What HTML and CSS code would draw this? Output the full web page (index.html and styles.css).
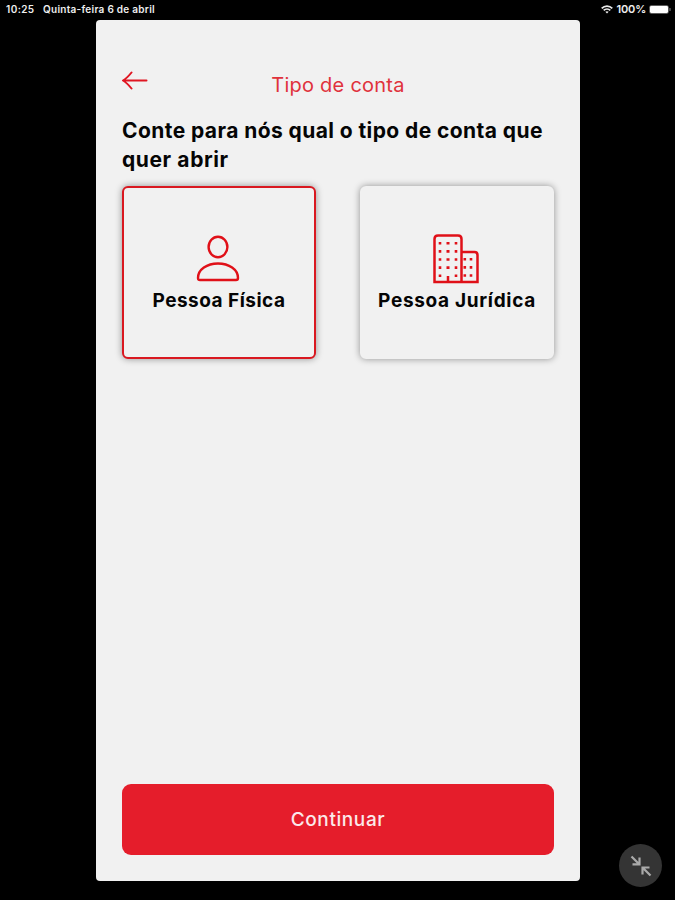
FILE: index.html
```
<!DOCTYPE html>
<html lang="pt-BR">
<head>
<meta charset="UTF-8">
<meta name="viewport" content="width=device-width, initial-scale=1.0">
<title>Tipo de conta</title>
<link rel="stylesheet" href="styles.css">
</head>
<body>
  <div class="statusbar">
    <span class="time">10:25</span>
    <span class="date">Quinta-feira 6 de abril</span>
    <svg class="wifi" width="12" height="9" viewBox="0 0 12 9" fill="none" stroke="#e8e8e8" stroke-width="1.8">
      <path d="M0.7 3.4C3.7 0.4 8.3 0.4 11.3 3.4"/>
      <path d="M2.7 5.4C4.6 3.6 7.4 3.6 9.3 5.4"/>
      <path d="M4.3 6.8L6 8.6L7.7 6.8C6.8 6 5.2 6 4.3 6.8Z" fill="#e8e8e8" stroke="none"/>
    </svg>
    <span class="percent">100%</span>
    <svg class="battery" width="22" height="9" viewBox="0 0 22 9">
      <rect x="0.3" y="0.3" width="19.4" height="8.4" rx="2" fill="#777"/>
      <rect x="1" y="1" width="18" height="7" rx="1.4" fill="#fff"/>
      <rect x="20.4" y="3" width="1.2" height="3" rx="0.6" fill="#777"/>
    </svg>
  </div>

  <main class="screen">
    <header class="topbar">
      <svg class="back" width="28" height="20" viewBox="0 0 28 20" fill="none" stroke="#e01622" stroke-width="2" stroke-linecap="round" stroke-linejoin="round">
        <path d="M24.500 9.500H1.500M9.500 1.500C7.500 4 4.500 7.500 1 9.500C4.500 11.500 7.500 15 9.500 17.500"/>
      </svg>
      <span class="title">Tipo de conta</span>
    </header>

    <h1>Conte para nós qual o tipo de conta que <span class="line2">quer abrir</span></h1>

    <div class="cards">
      <button type="button" class="card selected">
        <svg width="44" height="50" viewBox="0 0 44 50" fill="none" stroke="#e01018" stroke-width="2.4" stroke-linejoin="round">
          <ellipse cx="22" cy="13" rx="9.4" ry="10.2"/>
          <path d="M2 44C2 35.500 11 29.500 22 29.500C33 29.500 42 35.500 42 44C42 45.500 41.300 46 40 46H4C2.700 46 2 45.500 2 44Z"/>
        </svg>
        <span class="fisica">Pessoa Física</span>
      </button>
      <button type="button" class="card">
        <svg width="46" height="50" viewBox="0 0 46 50" fill="none" stroke="#e01018">
          <path stroke-width="2.500" d="M1.500 48V5C1.500 2.800 2.800 1.500 5 1.500H25C27.200 1.500 28.500 2.800 28.500 5V48ZM28.500 18H41.500C43.200 18 44.500 19.300 44.500 21V48H28.500M15 47.500V42"/>
          <path stroke-width="2.600" stroke-dasharray="2.600 5.500" d="M7 8V44M23 8V44M31.800 24V44M38 24V44"/>
          <path stroke-width="3" stroke-dasharray="2.600 5.500" d="M15 8V38"/>
        </svg>
        <span class="juridica">Pessoa Jurídica</span>
      </button>
    </div>

    <button type="button" class="continue">Continuar</button>
  </main>

  <div class="shrink">
    <svg width="22" height="22" viewBox="0 0 22 22" fill="none" stroke="#aaa" stroke-width="2.200">
      <path d="M1.500 1.500L9 9M2.500 9.300H9.500V2.500M20.500 20.500L13 13M19.500 12.500H12.500V19.500"/>
    </svg>
  </div>
</body>
</html>
```
FILE: styles.css
```
* {
  box-sizing: border-box;
}

body {
  margin: 0;
  height: 900px;
  overflow: hidden;
  background-color: #000;
  font-family: Inter, "Liberation Sans", sans-serif;
}

/* Tablet status bar */
.statusbar {
  display: flex;
  align-items: center;
  height: 20px;
  padding: 0 4px 2px 6px;
  color: #eee;
  font-size: 10px;
  font-weight: 600;
  white-space: nowrap;
}

.time {
  width: 37px;
  letter-spacing: 0.4px;
}

.date {
  letter-spacing: 0.27px;
}

.wifi {
  margin-left: auto;
}

.percent {
  margin: 0 3px 0 4px;
  font-size: 11px;
  letter-spacing: -0.2px;
}

/* App window */
.screen {
  display: flex;
  flex-direction: column;
  width: 484px;
  height: 861px;
  margin-left: 96px;
  padding: 0 26px 26px;
  background-color: #f1f1f1;
  border-radius: 4px;
}

.topbar {
  display: flex;
  height: 96px;
  padding-top: 51px;
}

.title {
  flex: 1;
  padding: 2px 28px 0 0;
  color: #e0323c;
  font-size: 20px;
  font-weight: 400;
  letter-spacing: 0.25px;
  line-height: 24px;
  text-align: center;
}

h1 {
  margin: 0;
  color: #050505;
  font-size: 21px;
  font-weight: 700;
  letter-spacing: 0.42px;
  line-height: 29px;
}

.line2 {
  letter-spacing: 0.6px;
}

/* Account type options */
.cards {
  display: flex;
  justify-content: space-between;
  margin-top: 12px;
}

.card {
  display: flex;
  flex-direction: column;
  align-items: center;
  width: 194px;
  height: 173px;
  padding: 46px 0 0;
  border: 2px solid #f1f1f1;
  border-radius: 6px;
  background-color: #f1f1f1;
  box-shadow: 0 0 7px rgba(0, 0, 0, 0.4);
  color: #050505;
  font-family: inherit;
  font-size: 19px;
  font-weight: 700;
  line-height: 34px;
  white-space: nowrap;
}

.card svg {
  flex-shrink: 0;
  margin-right: 2px;
}

.fisica {
  letter-spacing: 0.48px;
}

.juridica {
  letter-spacing: 0.68px;
}

.selected {
  border-color: #d91820;
}

.continue {
  height: 71px;
  margin-top: auto;
  padding: 0;
  border: 0;
  border-radius: 9px;
  background-color: #e51d2b;
  color: #fbe9ea;
  font-family: inherit;
  font-size: 19px;
  font-weight: 500;
  letter-spacing: 0.6px;
}

/* Floating button over the window edge */
.shrink {
  position: absolute;
  right: 13px;
  bottom: 13px;
  display: flex;
  align-items: center;
  justify-content: center;
  width: 43px;
  height: 43px;
  border-radius: 50%;
  background-color: #343434;
}
```
